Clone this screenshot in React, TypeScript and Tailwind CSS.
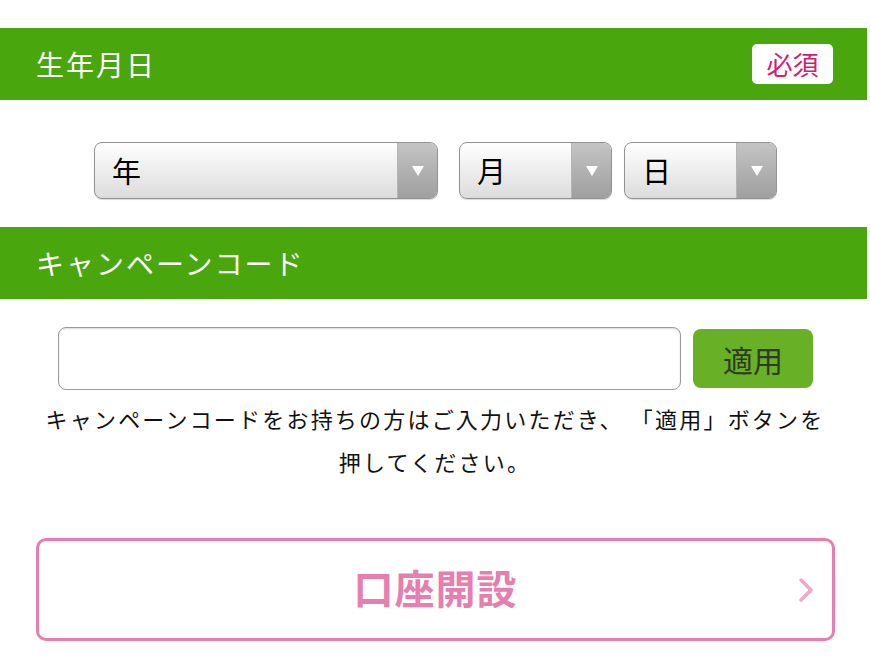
const jp = "font-['Noto_Sans_CJK_JP','Noto_Sans',sans-serif]";

function SelectBox({ label, width }: { label: string; width: string }) {
  return (
    <div
      className={`${width} h-[57px] flex rounded-[8px] border-[1.5px] border-[#929292] overflow-hidden bg-gradient-to-b from-[#ffffff] to-[#dcdcdc] shadow-[0_1px_1px_rgba(0,0,0,0.15)]`}
    >
      <div className="flex-1 flex items-center pl-[17px] text-[29px] text-black leading-none">
        {label}
      </div>
      <div className="w-[40px] flex items-center justify-center bg-gradient-to-b from-[#c4c4c4] to-[#9f9f9f] border-l border-[#b5b5b5]">
        <svg width="14" height="12" viewBox="0 0 14 12">
          <path d="M1 1 L13 1 L7 11 Z" fill="#ffffff" />
        </svg>
      </div>
    </div>
  );
}

function SectionBar({ title, required }: { title: string; required?: boolean }) {
  return (
    <div className="h-[72px] mr-[3px] bg-[#49a60c] flex items-center justify-between pl-[36px] pr-[34px]">
      <span className="text-white text-[28px] leading-none tracking-[2px]">{title}</span>
      {required && (
        <span className="w-[81px] h-[40px] bg-white rounded-[5px] flex items-center justify-center text-[#d1206e] text-[26px] leading-none">
          必須
        </span>
      )}
    </div>
  );
}

export default function App() {
  return (
    <div className={`${jp} w-[870px] h-[659px] bg-white overflow-hidden pt-[28px]`}>
      <SectionBar title="生年月日" required />

      <div className="flex pl-[94px] pt-[42px] pb-[28px]">
        <SelectBox label="年" width="w-[344px]" />
        <div className="w-[21px]" />
        <SelectBox label="月" width="w-[153px]" />
        <div className="w-[12px]" />
        <SelectBox label="日" width="w-[153px]" />
      </div>

      <SectionBar title="キャンペーンコード" />

      <div className="flex items-center pl-[58px] pt-[28px]">
        <input
          type="text"
          className="w-[623px] h-[63px] rounded-[8px] border-[1.5px] border-[#9b9b9b] bg-white shadow-[inset_0_1px_2px_rgba(0,0,0,0.15)] outline-none"
        />
        <button className="ml-[12px] w-[120px] h-[59px] rounded-[8px] bg-[#68b025] text-[#2e3b22] text-[30px] leading-none">
          適用
        </button>
      </div>

      <p className="mt-[7px] text-center text-[22px] leading-[43px] tracking-[2.2px] text-[#111]">
        キャンペーンコードをお持ちの方はご入力いただき、 「適用」ボタンを
        <br />
        押してください。
      </p>

      <div className="mt-[55px] ml-[36px] w-[799px] h-[103px] rounded-[10px] border-[3px] border-[#e77fae] flex items-center relative">
        <span className="flex-1 text-center text-[40px] font-bold leading-none text-[#e77fae] tracking-[1px] -mt-[5px]">
          口座開設
        </span>
        <svg
          className="absolute right-[18px] top-1/2 -translate-y-1/2"
          width="16"
          height="26"
          viewBox="0 0 16 26"
        >
          <path
            d="M3 3 L13 13 L3 23"
            fill="none"
            stroke="#f3a7c6"
            strokeWidth="3.5"
            strokeLinecap="round"
            strokeLinejoin="round"
          />
        </svg>
      </div>
    </div>
  );
}
